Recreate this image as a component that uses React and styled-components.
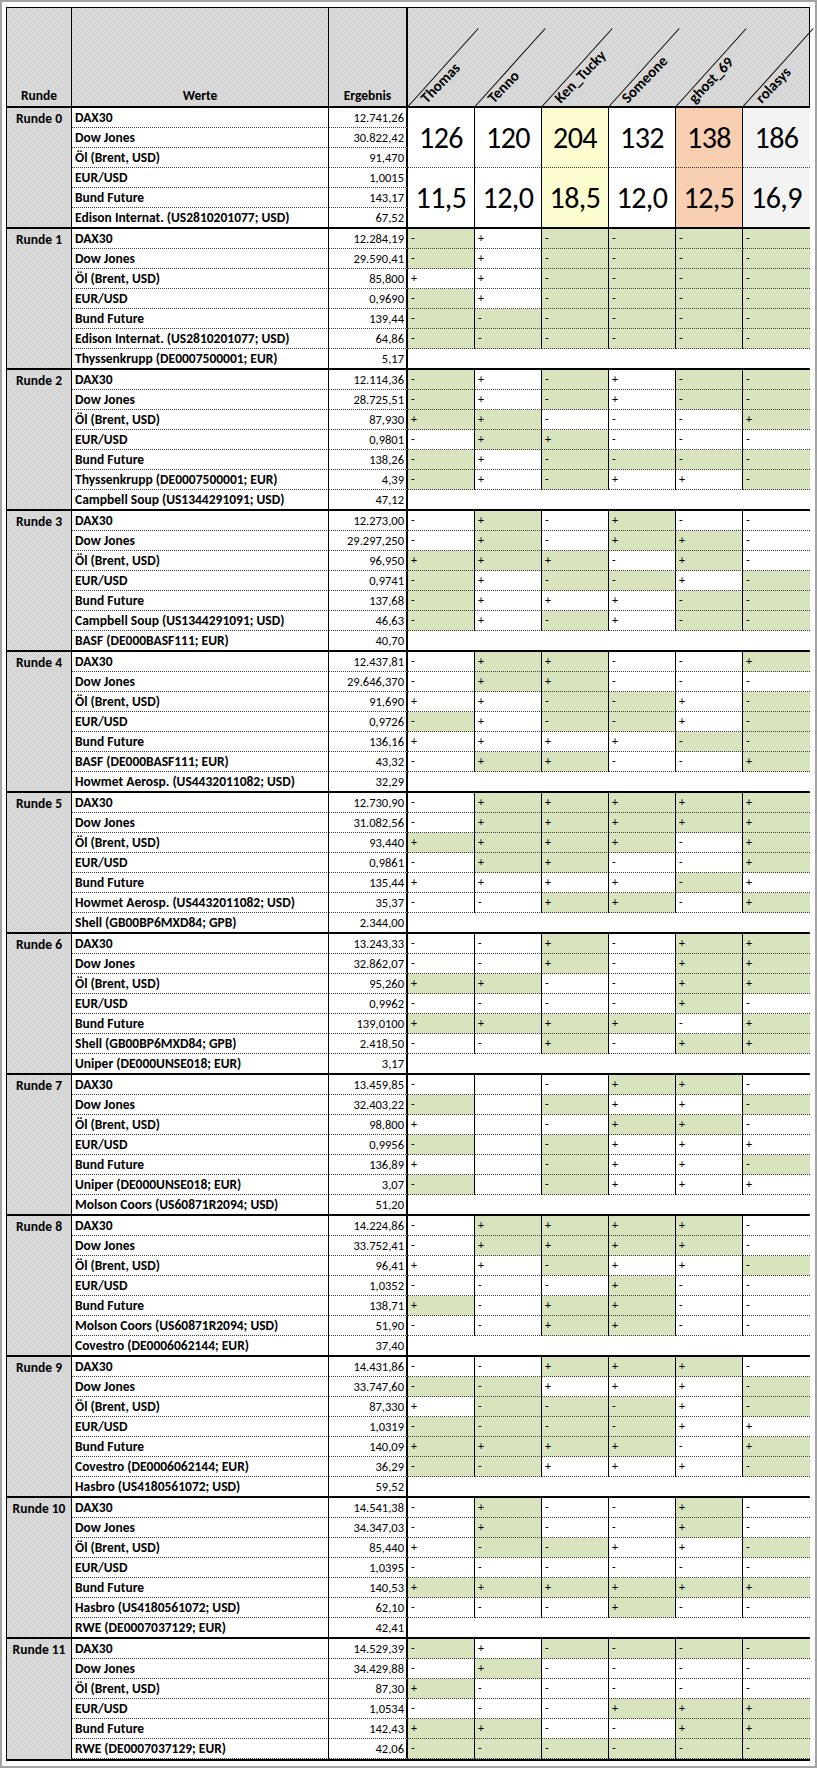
import React from "react";
import styled, { createGlobalStyle, css } from "styled-components";

const GlobalStyle = createGlobalStyle`
  html, body {
    margin: 0;
    padding: 0;
    background: #fff;
  }
  body {
    font-family: "Carlito", "Lato", "Liberation Sans", sans-serif;
    color: #000;
  }
`;

const COLS = "65px 257px 79px repeat(6, 67px)";

const grayFill = css`
  background-color: #d6d6d6;
  background-image: repeating-conic-gradient(#cdcdcd 0% 25%, #e1e1e1 0% 50%);
  background-size: 2px 2px;
`;

const greenFill = css`
  background-color: #d7e4bd;
  background-image: repeating-conic-gradient(#d0deb3 0% 25%, #dfe9c8 0% 50%);
  background-size: 2px 2px;
`;

const PLAYERS = ["Thomas", "Tenno", "Ken_Tucky", "Someone", "ghost_69", "rolasys"];
const TINTS = ["#ffffff", "#ffffff", "#fdfdcf", "#ffffff", "#f9cfb2", "#f3f3f3"];

const ROUND0 = {
  rows: [
    ["DAX30", "12.741,26"],
    ["Dow Jones", "30.822,42"],
    ["Öl (Brent, USD)", "91,470"],
    ["EUR/USD", "1,0015"],
    ["Bund Future", "143,17"],
    ["Edison Internat. (US2810201077; USD)", "67,52"],
  ],
  top: ["126", "120", "204", "132", "138", "186"],
  bottom: ["11,5", "12,0", "18,5", "12,0", "12,5", "16,9"],
};

// each tip string: sign + (g = green / w = white) for the six players
const ROUNDS = [
  {
    n: 1,
    rows: [
      ["DAX30", "12.284,19", "-g+w-g-g-g-g"],
      ["Dow Jones", "29.590,41", "-g+w-g-g-g-g"],
      ["Öl (Brent, USD)", "85,800", "+w+w-g-g-g-g"],
      ["EUR/USD", "0,9690", "-g+w-g-g-g-g"],
      ["Bund Future", "139,44", "-g-g-g-g-g-g"],
      ["Edison Internat. (US2810201077; USD)", "64,86", "-g-g-g-g-g-g"],
    ],
    extra: ["Thyssenkrupp (DE0007500001; EUR)", "5,17"],
  },
  {
    n: 2,
    rows: [
      ["DAX30", "12.114,36", "-g+w-g+w-g-g"],
      ["Dow Jones", "28.725,51", "-g+w-g+w-g-g"],
      ["Öl (Brent, USD)", "87,930", "+g+g-w-w-w+g"],
      ["EUR/USD", "0,9801", "-w+g+g-w-w-w"],
      ["Bund Future", "138,26", "-g+w-g-g-g-g"],
      ["Thyssenkrupp (DE0007500001; EUR)", "4,39", "-g+w-g+w+w-g"],
    ],
    extra: ["Campbell Soup (US1344291091; USD)", "47,12"],
  },
  {
    n: 3,
    rows: [
      ["DAX30", "12.273,00", "-w+g-w+g-w-w"],
      ["Dow Jones", "29.297,250", "-w+g-w+g+g-w"],
      ["Öl (Brent, USD)", "96,950", "+g+g+g-w+g-w"],
      ["EUR/USD", "0,9741", "-g+w-g-g+w-g"],
      ["Bund Future", "137,68", "-g+w+w+w-g-g"],
      ["Campbell Soup (US1344291091; USD)", "46,63", "-g+w-g+w-g-g"],
    ],
    extra: ["BASF (DE000BASF111; EUR)", "40,70"],
  },
  {
    n: 4,
    rows: [
      ["DAX30", "12.437,81", "-w+g+g-w-w+g"],
      ["Dow Jones", "29.646,370", "-w+g+g-w-w-w"],
      ["Öl (Brent, USD)", "91,690", "+w+w-g-g+w-g"],
      ["EUR/USD", "0,9726", "-g+w-g-g+w-g"],
      ["Bund Future", "136,16", "+w+w+w+w-g-g"],
      ["BASF (DE000BASF111; EUR)", "43,32", "-w+g+g-w-w+g"],
    ],
    extra: ["Howmet Aerosp. (US4432011082; USD)", "32,29"],
  },
  {
    n: 5,
    rows: [
      ["DAX30", "12.730,90", "-w+g+g+g+g+g"],
      ["Dow Jones", "31.082,56", "-w+g+g+g+g+g"],
      ["Öl (Brent, USD)", "93,440", "+g+g+g+g-w+g"],
      ["EUR/USD", "0,9861", "-w+g+g-w-w+g"],
      ["Bund Future", "135,44", "+w+w+w+w-g+w"],
      ["Howmet Aerosp. (US4432011082; USD)", "35,37", "-w-w+g+g-w+g"],
    ],
    extra: ["Shell (GB00BP6MXD84; GPB)", "2.344,00"],
  },
  {
    n: 6,
    rows: [
      ["DAX30", "13.243,33", "-w-w+g-w+g+g"],
      ["Dow Jones", "32.862,07", "-w-w+g-w+g+g"],
      ["Öl (Brent, USD)", "95,260", "+g+g-w-w+g+g"],
      ["EUR/USD", "0,9962", "-w-w-w-w+g-w"],
      ["Bund Future", "139,0100", "+g+g+g+g-w+g"],
      ["Shell (GB00BP6MXD84; GPB)", "2.418,50", "-w-w+g-w+g+g"],
    ],
    extra: ["Uniper (DE000UNSE018; EUR)", "3,17"],
  },
  {
    n: 7,
    rows: [
      ["DAX30", "13.459,85", "-w w-w+g+g-w"],
      ["Dow Jones", "32.403,22", "-g w-g+w+w-g"],
      ["Öl (Brent, USD)", "98,800", "+w w-w+g+g-w"],
      ["EUR/USD", "0,9956", "-g w-g+w+w+w"],
      ["Bund Future", "136,89", "+w w-g+w+w-g"],
      ["Uniper (DE000UNSE018; EUR)", "3,07", "-g w-g+w+w+w"],
    ],
    extra: ["Molson Coors (US60871R2094; USD)", "51,20"],
  },
  {
    n: 8,
    rows: [
      ["DAX30", "14.224,86", "-w+g+g+g+g-w"],
      ["Dow Jones", "33.752,41", "-w+g+g+g+g-w"],
      ["Öl (Brent, USD)", "96,41", "+w+w-g+w+w-g"],
      ["EUR/USD", "1,0352", "-w-w-w+g-w-w"],
      ["Bund Future", "138,71", "+g-w+g+g-w-w"],
      ["Molson Coors (US60871R2094; USD)", "51,90", "-w-w+g+g-w-w"],
    ],
    extra: ["Covestro (DE0006062144; EUR)", "37,40"],
  },
  {
    n: 9,
    rows: [
      ["DAX30", "14.431,86", "-w-w+g+g+g-w"],
      ["Dow Jones", "33.747,60", "-g-g+w+w+w-g"],
      ["Öl (Brent, USD)", "87,330", "+w-g-g-g+w-g"],
      ["EUR/USD", "1,0319", "-g-g-g-g+w+w"],
      ["Bund Future", "140,09", "+g+g+g+g-w+g"],
      ["Covestro (DE0006062144; EUR)", "36,29", "-g-g+w+w+w-g"],
    ],
    extra: ["Hasbro (US4180561072; USD)", "59,52"],
  },
  {
    n: 10,
    rows: [
      ["DAX30", "14.541,38", "-w+g-w-w+g-w"],
      ["Dow Jones", "34.347,03", "-w+g-w-w+g-w"],
      ["Öl (Brent, USD)", "85,440", "+w-g-g+w+w-g"],
      ["EUR/USD", "1,0395", "-w-w-w-w-w-w"],
      ["Bund Future", "140,53", "+g+g+g+g+g+g"],
      ["Hasbro (US4180561072; USD)", "62,10", "-w-w-w+g-w-w"],
    ],
    extra: ["RWE (DE0007037129; EUR)", "42,41"],
  },
  {
    n: 11,
    rows: [
      ["DAX30", "14.529,39", "-g+w-g-g-g-g"],
      ["Dow Jones", "34.429,88", "-w+g-w-w-w-w"],
      ["Öl (Brent, USD)", "87,30", "+g-w-w-w-w-w"],
      ["EUR/USD", "1,0534", "-w-w-w+g+g+g"],
      ["Bund Future", "142,43", "+g+g-w-w+g+g"],
      ["RWE (DE0007037129; EUR)", "42,06", "-g-g-g-g-g-g"],
    ],
    extra: null,
  },
];

const Frame = styled.div`
  width: 817px;
  box-sizing: border-box;
  border: 2px solid #a3a3a3;
  padding: 5px 5px 5px 4px;
`;

const Sheet = styled.div`
  width: 804px;
  box-sizing: border-box;
  border: 1px solid #000;
  border-bottom: 2px solid #000;
  font-size: 13px;
  line-height: 19px;
`;

const Header = styled.div`
  display: grid;
  grid-template-columns: ${COLS};
  height: 99px;
  ${grayFill};
`;

const HeadCell = styled.div`
  display: flex;
  align-items: flex-end;
  justify-content: center;
  padding-bottom: 2px;
  font-size: 13.5px;
  font-weight: 700;
  border-right: ${(p) => (p.$thick ? 2 : 1)}px solid #000;
`;

const PlayerHead = styled.div`
  position: relative;
`;

const Slash = styled.span`
  position: absolute;
  left: 0;
  bottom: 0;
  width: 105px;
  height: 1px;
  background: #000;
  transform-origin: 0 50%;
  transform: rotate(-48deg);
`;

const PlayerName = styled.span`
  position: absolute;
  left: 21px;
  bottom: 1px;
  font-size: 15px;
  line-height: 1;
  font-weight: 700;
  white-space: nowrap;
  transform-origin: 0 100%;
  transform: rotate(-46deg);
`;

const Round = styled.div`
  display: grid;
  grid-template-columns: ${COLS};
  grid-auto-rows: 20px;
  border-top: 2px solid #000;
  margin-top: -1px;
  position: relative;
`;

const RoundLabel = styled.div`
  grid-column: 1;
  grid-row: 1 / span ${(p) => p.$span};
  ${grayFill};
  border-right: 1px solid #000;
  font-size: 13.5px;
  font-weight: 700;
  text-align: center;
  padding-top: 1px;
`;

const cellLine = css`
  box-sizing: border-box;
  border-bottom: 1px dotted #3a3a3a;
  overflow: hidden;
  white-space: nowrap;
`;

const Name = styled.div`
  ${cellLine};
  grid-column: 2;
  border-right: 1px solid #000;
  font-size: 13.5px;
  font-weight: 700;
  padding-left: 3px;
  background: #fff;
`;

const Value = styled.div`
  ${cellLine};
  grid-column: 3;
  border-right: 2px solid #000;
  font-size: 12.5px;
  text-align: right;
  padding-right: 2px;
  background: #fff;
`;

const Tip = styled.div`
  ${cellLine};
  border-right: ${(p) => (p.$last ? "none" : "1px solid #000")};
  padding-left: 3px;
  font-size: 12px;
  ${(p) => (p.$green ? greenFill : "background: #fff;")}
`;

const Empty = styled.div`
  ${cellLine};
  grid-column: 4 / span 6;
  background: #fff;
`;

const Score = styled.div`
  box-sizing: border-box;
  grid-column: ${(p) => p.$col};
  grid-row: ${(p) => p.$row} / span 3;
  display: flex;
  align-items: center;
  justify-content: center;
  font-size: 30px;
  line-height: 1;
  letter-spacing: -0.5px;
  background: ${(p) => p.$tint};
  border-right: ${(p) => (p.$last ? "none" : "1px solid #000")};
  border-bottom: 1px dotted #3a3a3a;
`;

const FirstRound = () => (
  <Round>
    <RoundLabel $span={6}>Runde 0</RoundLabel>
    {ROUND0.rows.map(([name, value], r) => (
      <React.Fragment key={name}>
        <Name style={{ gridRow: r + 1 }}>{name}</Name>
        <Value style={{ gridRow: r + 1 }}>{value}</Value>
      </React.Fragment>
    ))}
    {[ROUND0.top, ROUND0.bottom].map((list, b) =>
      list.map((v, i) => (
        <Score
          key={`${b}-${i}`}
          $col={i + 4}
          $row={b * 3 + 1}
          $tint={TINTS[i]}
          $last={i === 5}
        >
          {v}
        </Score>
      ))
    )}
  </Round>
);

const TipRound = ({ round }) => {
  const span = round.rows.length + (round.extra ? 1 : 0);
  return (
    <Round>
      <RoundLabel $span={span}>Runde {round.n}</RoundLabel>
      {round.rows.map(([name, value, tips]) => (
        <React.Fragment key={name}>
          <Name>{name}</Name>
          <Value>{value}</Value>
          {PLAYERS.map((p, i) => (
            <Tip key={p} $green={tips[i * 2 + 1] === "g"} $last={i === 5}>
              {tips[i * 2].trim()}
            </Tip>
          ))}
        </React.Fragment>
      ))}
      {round.extra && (
        <>
          <Name>{round.extra[0]}</Name>
          <Value>{round.extra[1]}</Value>
          <Empty />
        </>
      )}
    </Round>
  );
};

const App = () => (
  <>
    <GlobalStyle />
    <Frame>
      <Sheet>
        <Header>
          <HeadCell>Runde</HeadCell>
          <HeadCell>Werte</HeadCell>
          <HeadCell $thick>Ergebnis</HeadCell>
          {PLAYERS.map((p) => (
            <PlayerHead key={p}>
              <Slash />
              <PlayerName>{p}</PlayerName>
            </PlayerHead>
          ))}
        </Header>
        <FirstRound />
        {ROUNDS.map((r) => (
          <TipRound key={r.n} round={r} />
        ))}
      </Sheet>
    </Frame>
  </>
);

export default App;
